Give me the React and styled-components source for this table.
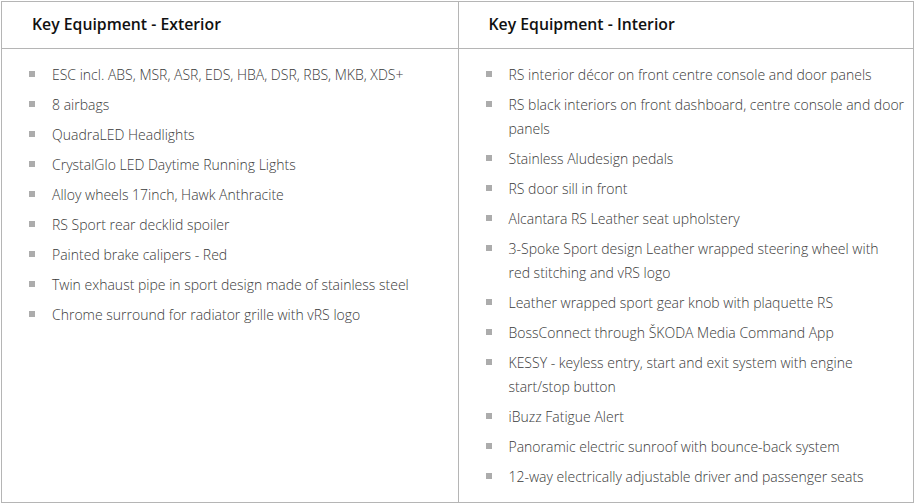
import React from "react";
import styled, { createGlobalStyle } from "styled-components";

const GlobalStyle = createGlobalStyle`
  html, body {
    margin: 0;
    padding: 0;
    background: #fff;
  }
  body {
    padding: 1px 0 0 1px;
    font-family: "Open Sans", "Liberation Sans", sans-serif;
  }
`;

const Table = styled.div`
  width: 913px;
  height: 502px;
  box-sizing: border-box;
  border: 1px solid #b5b5b5;
  display: grid;
  grid-template-columns: 1fr 1fr;
  grid-template-rows: 47px 1fr;
`;

const HeadCell = styled.div`
  display: flex;
  align-items: center;
  padding: 0 0 2px 30px;
  border-bottom: 1px solid #b5b5b5;
  border-left: ${(p) => (p.$right ? "1px solid #b5b5b5" : "none")};
  font-size: 15.8px;
  font-weight: 600;
  color: #111;
`;

const BodyCell = styled.div`
  border-left: ${(p) => (p.$right ? "1px solid #b5b5b5" : "none")};
  padding: 14px 0 0 27px;
`;

const List = styled.ul`
  list-style: none;
  margin: 0;
  padding: 0;
  display: flex;
  flex-direction: column;
  gap: 6px;
`;

const Item = styled.li`
  display: grid;
  grid-template-columns: 23px 1fr;
  font-size: 14px;
  font-weight: 300;
  line-height: 24px;
  color: #3a3a3a;
  white-space: pre-line;
  &::before {
    content: "";
    width: 6px;
    height: 6px;
    margin-top: 8px;
    background: #acacac;
  }
`;

const exterior = [
  "ESC incl. ABS, MSR, ASR, EDS, HBA, DSR, RBS, MKB, XDS+",
  "8 airbags",
  "QuadraLED Headlights",
  "CrystalGlo LED Daytime Running Lights",
  "Alloy wheels 17inch, Hawk Anthracite",
  "RS Sport rear decklid spoiler",
  "Painted brake calipers - Red",
  "Twin exhaust pipe in sport design made of stainless steel",
  "Chrome surround for radiator grille with vRS logo",
];

const interior = [
  "RS interior décor on front centre console and door panels",
  "RS black interiors on front dashboard, centre console and door panels",
  "Stainless Aludesign pedals",
  "RS door sill in front",
  "Alcantara RS Leather seat upholstery",
  "3-Spoke Sport design Leather wrapped steering wheel with\nred stitching and vRS logo",
  "Leather wrapped sport gear knob with plaquette RS",
  "BossConnect through ŠKODA Media Command App",
  "KESSY - keyless entry, start and exit system with engine start/stop button",
  "iBuzz Fatigue Alert",
  "Panoramic electric sunroof with bounce-back system",
  "12-way electrically adjustable driver and passenger seats",
];

export default function App() {
  return (
    <>
      <GlobalStyle />
      <Table>
        <HeadCell>Key Equipment - Exterior</HeadCell>
        <HeadCell $right>Key Equipment - Interior</HeadCell>
        <BodyCell>
          <List>
            {exterior.map((t) => (
              <Item key={t}>{t}</Item>
            ))}
          </List>
        </BodyCell>
        <BodyCell $right>
          <List>
            {interior.map((t) => (
              <Item key={t}>{t}</Item>
            ))}
          </List>
        </BodyCell>
      </Table>
    </>
  );
}
